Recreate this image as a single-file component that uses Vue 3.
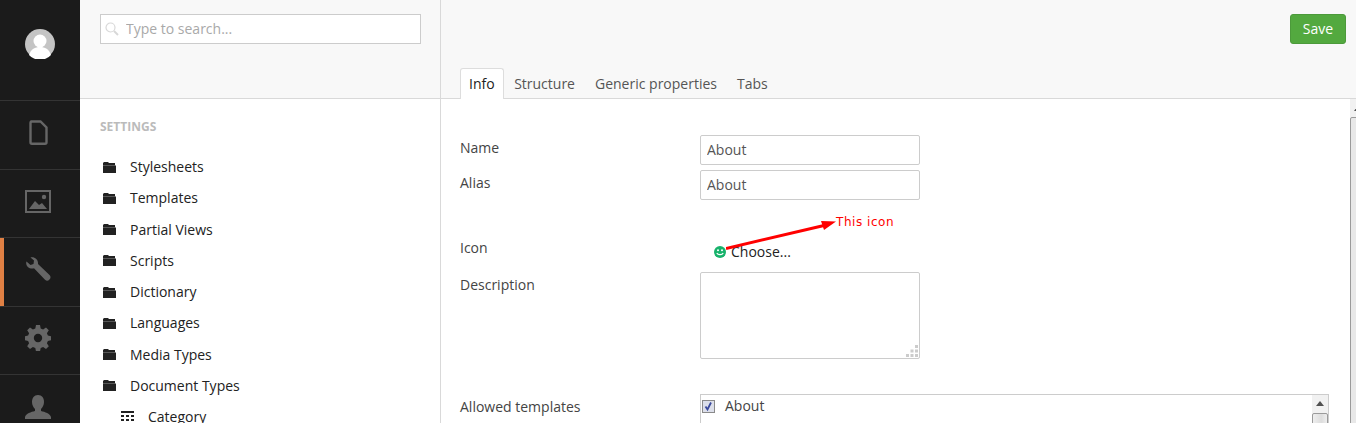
<script setup>
const settings = ['Stylesheets', 'Templates', 'Partial Views', 'Scripts', 'Dictionary', 'Languages', 'Media Types', 'Document Types']
const tabs = ['Info', 'Structure', 'Generic properties', 'Tabs']
</script>

<template>
  <div class="page">
    <nav class="nav">
      <div class="nav-user">
        <svg class="avatar" width="30" height="30" viewBox="0 0 30 30">
          <circle cx="15" cy="15" r="15" fill="#c4c4c4" />
          <circle cx="15" cy="12" r="6.5" fill="#fff" />
          <path d="M4 26c2-6 6-8 11-8s9 2 11 8a15 15 0 0 1-22 0z" fill="#fff" />
        </svg>
      </div>
      <div class="nav-item">
        <svg width="20" height="25" viewBox="0 0 20 25" fill="none" stroke="#666" stroke-width="2.4">
          <path d="M2.5 1.5h10l6 6v14.800a1.500 1.500 0 0 1-1.500 1.500h-13a1.500 1.500 0 0 1-1.500-1.500v-19.300a1.500 1.500 0 0 1 1.500-1.500z" />
        </svg>
      </div>
      <div class="nav-item">
        <svg width="26" height="23" viewBox="0 0 26 23">
          <rect x="1" y="1" width="24" height="21" fill="none" stroke="#666" stroke-width="2" />
          <circle cx="19" cy="7" r="2.200" fill="#666" />
          <path d="M4 19l6-8 4 4 3-2 5 6z" fill="#666" />
        </svg>
      </div>
      <div class="nav-item active">
        <svg width="26" height="26" viewBox="0 0 26 26">
          <path d="M1.500 4.500l4 3.500 3-1 .5-3.500-3.500-3c4-1 8 2 7.500 6.500l11.500 11a3.300 3.300 0 0 1-4.500 4.800l-11-11.500c-5 1-9-2.500-7.500-7z" fill="#666" />
        </svg>
      </div>
      <div class="nav-item">
        <svg width="26" height="26" viewBox="0 0 26 26">
          <path d="M11 0h4l.7 3.400 2.400 1 2.900-1.900 2.800 2.800-1.900 2.900 1 2.400 3.100.6v4l-3.100.7-1 2.400 1.900 2.900-2.800 2.800-2.900-1.900-2.400 1-.7 3.400h-4l-.7-3.400-2.400-1-2.900 1.900-2.800-2.800 1.900-2.900-1-2.400-3.100-.7v-4l3.100-.6 1-2.400-1.900-2.900 2.800-2.800 2.900 1.900 2.400-1z" fill="#666" />
          <circle cx="13" cy="13" r="4.200" fill="#1b1b1b" />
        </svg>
      </div>
      <div class="nav-item">
        <svg width="26" height="26" viewBox="0 0 26 26">
          <path d="M13 1c4 0 6 3 6 7 0 3-1.500 5.500-3 7v2c4 1 9 2.500 10 6v2h-26v-2c1-3.500 6-5 10-6v-2c-1.500-1.500-3-4-3-7 0-4 2-7 6-7z" fill="#666" />
        </svg>
      </div>
    </nav>

    <aside class="tree">
      <div class="tree-head">
        <div class="search">
          <svg width="14" height="14" viewBox="0 0 14 14" fill="none" stroke="#d8d8d8">
            <circle cx="5.500" cy="5.500" r="4.500" stroke-width="1.200" />
            <path d="M9 9l4 4" stroke-width="2" />
          </svg>
          <input class="search-input" placeholder="Type to search..." />
        </div>
      </div>
      <div class="tree-body">
        <h5 class="tree-title">SETTINGS</h5>
        <ul class="tree-list">
          <li v-for="s in settings" :key="s" class="tree-row">
            <svg class="folder" width="13" height="11" viewBox="0 0 13 11">
              <path d="M1 0h4l1 1h6v2.200H0V1zM0 3.600h13V11H0z" fill="#222" />
            </svg>
            <span>{{ s }}</span>
          </li>
          <li class="tree-row sub">
            <svg class="folder" width="13" height="12" viewBox="0 0 13 12" fill="#222">
              <rect x="0" y="0" width="13" height="2" />
              <rect x="0" y="4" width="3" height="2" /><rect x="5" y="4" width="3" height="2" /><rect x="10" y="4" width="3" height="2" />
              <rect x="0" y="8" width="3" height="2" /><rect x="5" y="8" width="3" height="2" /><rect x="10" y="8" width="3" height="2" />
            </svg>
            <span>Category</span>
          </li>
        </ul>
      </div>
    </aside>

    <main class="main">
      <header class="main-head">
        <div class="save-row"><button class="save">Save</button></div>
        <div class="tabs">
          <span v-for="(t, i) in tabs" :key="t" class="tab" :class="{ on: i === 0 }">{{ t }}</span>
        </div>
      </header>
      <section class="form">
        <div class="field f-name">
          <label>Name</label>
          <input class="text" value="About" />
        </div>
        <div class="field f-alias">
          <label>Alias</label>
          <input class="text" value="About" />
        </div>
        <div class="field f-icon">
          <label>Icon</label>
          <div class="choose">
            <svg width="12" height="12" viewBox="0 0 12 12">
              <circle cx="6" cy="6" r="6" fill="#17b26b" />
              <circle cx="4" cy="4.300" r="1" fill="#fff" />
              <circle cx="8" cy="4.300" r="1" fill="#fff" />
              <path d="M2.800 7c1 2.200 5.400 2.200 6.400 0" fill="none" stroke="#fff" stroke-width="1.200" />
            </svg>
            <span>Choose...</span>
          </div>
        </div>
        <div class="field f-desc">
          <label>Description</label>
          <div class="area">
            <textarea></textarea>
            <svg class="grip" width="12" height="12" viewBox="0 0 12 12" fill="#ccc">
              <rect x="9" y="0" width="3" height="3" />
              <rect x="4.500" y="4.500" width="3" height="3" /><rect x="9" y="4.500" width="3" height="3" />
              <rect x="0" y="9" width="3" height="3" /><rect x="4.500" y="9" width="3" height="3" /><rect x="9" y="9" width="3" height="3" />
            </svg>
          </div>
        </div>
        <div class="field f-allowed">
          <label>Allowed templates</label>
          <div class="list">
            <div class="list-row">
              <svg width="13" height="13" viewBox="0 0 13 13">
                <rect x=".5" y=".5" width="12" height="12" fill="#dcdfea" stroke="#8a8a8a" />
                <path d="M3.500 6.500l2 3 3.500-7" fill="none" stroke="#3b4a9c" stroke-width="1.800" />
              </svg>
              <span>About</span>
            </div>
            <div class="bar">
              <i class="arrow"></i>
              <i class="thumb"></i>
            </div>
          </div>
        </div>
      </section>
      <div class="page-bar">
        <i class="page-arrow"></i>
        <i class="page-thumb"></i>
      </div>

      <svg class="note-arrow" width="112" height="30" viewBox="0 0 112 30">
        <path d="M0 28.500L98 5.500" stroke="#f00" stroke-width="3" />
        <path d="M110 1.500L95 1l3 9z" fill="#f00" />
      </svg>
      <span class="note">This icon</span>
    </main>
  </div>
</template>

<style>
html, body { margin: 0; overflow: hidden; background: #fff; }
</style>

<style scoped>
.page {
  display: flex;
  width: 1356px;
  height: 423px;
  overflow: hidden;
  font: 14px/20px "Open Sans", sans-serif;
  color: #222;
}
.nav { width: 80px; flex: none; background: #1b1b1b; }
.nav-user { height: 100px; display: flex; align-items: center; justify-content: center; padding-bottom: 12px; box-sizing: border-box; }
.avatar { display: block; }
.nav-item {
  height: 68.500px;
  box-sizing: border-box;
  border-top: 1px solid #343434;
  display: flex;
  align-items: center;
  justify-content: center;
  position: relative;
  padding: 0 4px 4px 0;
}
.nav-item.active { box-shadow: inset 4px 0 0 #e08044; }
.tree { width: 361px; flex: none; box-sizing: border-box; border-right: 1px solid #d9d9d9; }
.tree-head { height: 99px; box-sizing: border-box; background: #f8f8f8; border-bottom: 1px solid #d9d9d9; padding: 14px 19px 0 20px; }
.search { display: flex; align-items: center; height: 30px; box-sizing: border-box; border: 1px solid #ccc; background: #fff; padding-left: 4px; gap: 7px; }
.search-input { flex: 1; min-width: 0; border: 0; outline: 0; background: none; padding: 0; font: inherit; }
.search-input::placeholder { color: #a9a9a9; opacity: 1; }
.tree-body { padding: 20px 0 0 20px; }
.tree-title { margin: 0; font-size: 12px; line-height: 16px; font-weight: 700; color: #bbb; }
.tree-list { list-style: none; margin: 16.400px 0 0; padding: 0; }
.tree-row { display: flex; align-items: center; height: 31.250px; padding-left: 3px; }
.tree-row.sub { padding-left: 21px; }
.folder { flex: none; margin-right: 14px; }
.main { flex: 1; min-width: 0; position: relative; }
.main-head { height: 99px; box-sizing: border-box; background: #f8f8f8; border-bottom: 1px solid #d9d9d9; display: flex; flex-direction: column; justify-content: space-between; padding: 14px 10px 0 19px; }
.save-row { display: flex; justify-content: flex-end; }
.save { height: 30px; width: 56px; padding: 0; border: 1px solid #4c9a3b; border-radius: 3px; background: #53a93f; color: #fff; font: inherit; }
.tabs { display: flex; margin-bottom: -1px; }
.tab { height: 31px; box-sizing: border-box; padding: 6px 10px 5px; line-height: 20px; color: #555; }
.tab.on { color: #222; background: #fff; border: 1px solid #ddd; border-bottom: 0; border-radius: 3px 3px 0 0; padding: 5px 8px; margin-right: .5px; }
.form { padding: 36px 0 0 19px; }
.field { display: flex; }
.field label { width: 240px; flex: none; color: #444; padding-top: 3px; }
.text { width: 220px; height: 30px; box-sizing: border-box; border: 1px solid #ccc; border-radius: 2px; padding: 0 6px 2px; font: inherit; color: #555; outline: 0; }
.f-alias { margin-top: 5px; }
.f-icon { margin-top: 35px; height: 37px; }
.choose { display: flex; align-items: center; height: 20px; margin-top: 7px; padding-left: 14px; gap: 5px; }
.area { width: 220px; height: 87px; position: relative; }
.area textarea { display: block; width: 100%; height: 100%; box-sizing: border-box; border: 1px solid #ccc; border-radius: 2px; outline: 0; resize: none; }
.grip { position: absolute; right: 2px; bottom: 2px; }
.f-allowed { margin-top: 35px; }
.list { width: 629px; height: 60px; box-sizing: border-box; border: 1px solid #ccc; position: relative; }
.list-row { display: flex; align-items: center; height: 22px; padding-left: 1px; gap: 10px; color: #444; }
.bar { position: absolute; top: 0; right: 0; bottom: 0; width: 16px; background: #f1f1f1; }
.arrow { position: absolute; left: 4px; top: 6px; border: 4px solid transparent; border-top: 0; border-bottom: 5px solid #505050; }
.thumb { position: absolute; left: 0; right: 0; top: 18px; height: 40px; box-sizing: border-box; background: linear-gradient(90deg, #eee, #ddd 60%, #eee); border: 1px solid #9a9a9a; border-radius: 2px; }
.page-bar { position: absolute; top: 99px; right: 0; bottom: 0; width: 6px; background: #f1f1f1; }
.page-arrow { position: absolute; left: 4px; top: 8px; border: 3px solid transparent; border-top: 0; border-bottom: 4px solid #505050; }
.page-thumb { position: absolute; left: 0; right: -4px; top: 18px; bottom: -20px; box-sizing: border-box; background: #e8e8e8; border: 1px solid #9a9a9a; border-radius: 2px; }
.note-arrow { position: absolute; left: 285px; top: 220px; }
.note { position: absolute; left: 395px; top: 213px; font: 12px/18px "DejaVu Sans", sans-serif; color: #f00; letter-spacing: .55px; }
</style>
